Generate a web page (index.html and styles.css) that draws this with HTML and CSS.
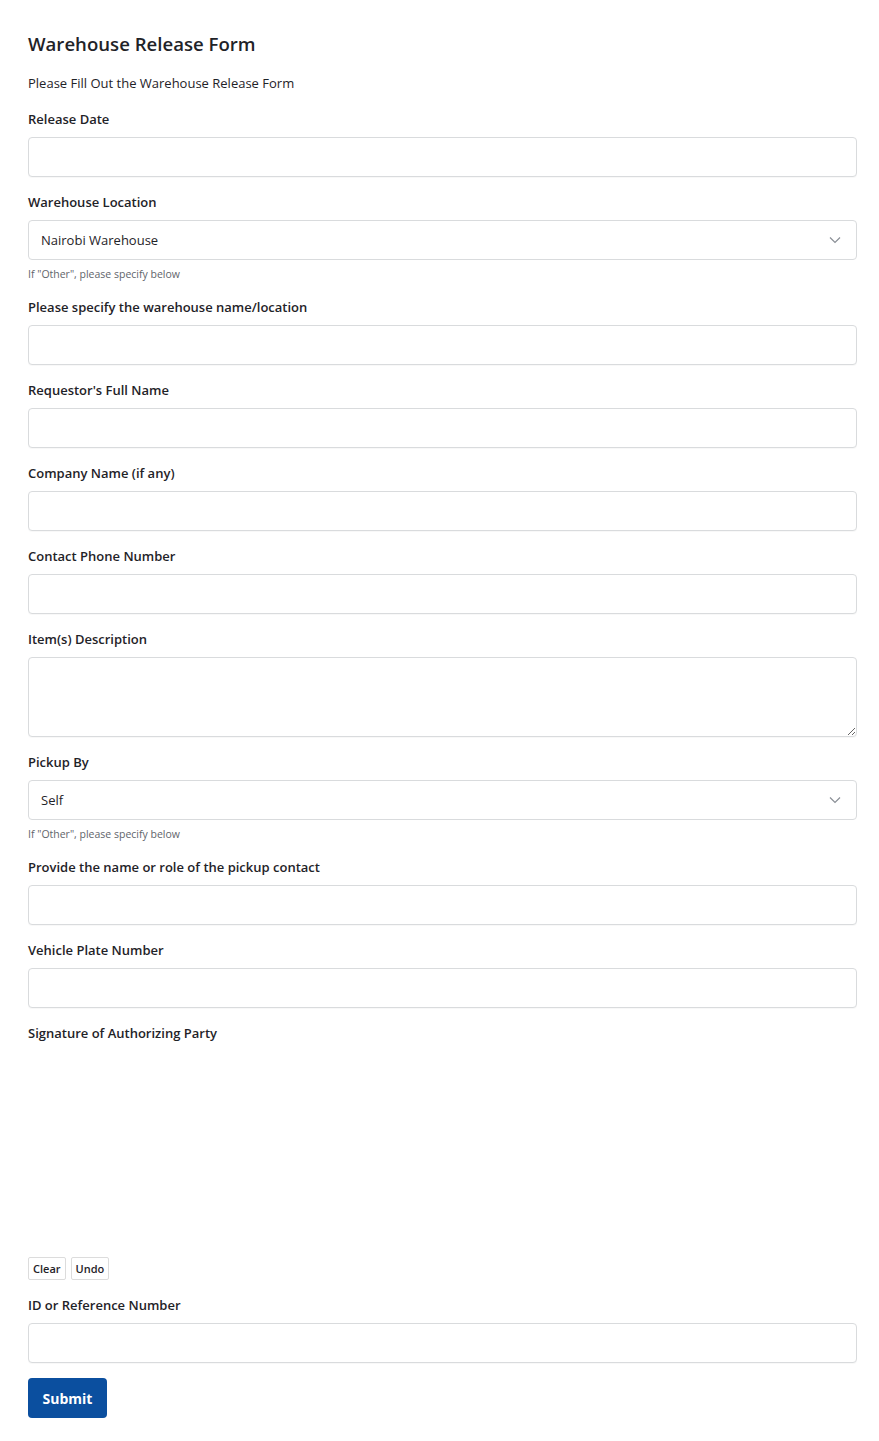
FILE: index.html
```html
<!DOCTYPE html>
<html lang="en">
<head>
<meta charset="utf-8">
<title>Warehouse Release Form</title>
<link rel="stylesheet" href="styles.css">
</head>
<body>
<main class="page">
  <h1 class="title">Warehouse Release Form</h1>
  <p class="intro">Please Fill Out the Warehouse Release Form</p>
  <form class="form">
    <div class="field">
      <label class="label">Release Date</label>
      <input class="input" type="text">
    </div>
    <div class="field">
      <label class="label">Warehouse Location</label>
      <div class="select">
        <span class="select-value">Nairobi Warehouse</span>
        <svg class="chevron" width="12" height="8" viewBox="0 0 12 8"><path d="M1 1.5 L6 6.5 L11 1.5" fill="none" stroke="#8a8f96" stroke-width="1.2"/></svg>
      </div>
      <div class="help">If "Other", please specify below</div>
    </div>
    <div class="field">
      <label class="label">Please specify the warehouse name/location</label>
      <input class="input" type="text">
    </div>
    <div class="field">
      <label class="label">Requestor's Full Name</label>
      <input class="input" type="text">
    </div>
    <div class="field">
      <label class="label">Company Name (if any)</label>
      <input class="input" type="text">
    </div>
    <div class="field">
      <label class="label">Contact Phone Number</label>
      <input class="input" type="text">
    </div>
    <div class="field">
      <label class="label">Item(s) Description</label>
      <textarea class="input textarea"></textarea>
    </div>
    <div class="field">
      <label class="label">Pickup By</label>
      <div class="select">
        <span class="select-value">Self</span>
        <svg class="chevron" width="12" height="8" viewBox="0 0 12 8"><path d="M1 1.5 L6 6.5 L11 1.5" fill="none" stroke="#8a8f96" stroke-width="1.2"/></svg>
      </div>
      <div class="help">If "Other", please specify below</div>
    </div>
    <div class="field">
      <label class="label">Provide the name or role of the pickup contact</label>
      <input class="input" type="text">
    </div>
    <div class="field">
      <label class="label">Vehicle Plate Number</label>
      <input class="input" type="text">
    </div>
    <div class="field">
      <label class="label">Signature of Authorizing Party</label>
      <div class="signature"></div>
      <div class="sig-actions">
        <button type="button" class="small-btn">Clear</button>
        <button type="button" class="small-btn">Undo</button>
      </div>
    </div>
    <div class="field">
      <label class="label">ID or Reference Number</label>
      <input class="input" type="text">
    </div>
    <button type="button" class="submit">Submit</button>
  </form>
</main>
</body>
</html>
```

FILE: styles.css
```css
* { box-sizing: border-box; }
html, body { margin: 0; padding: 0; background: #ffffff; }
body {
  font-family: "Open Sans", "Noto Sans", "Liberation Sans", sans-serif;
  color: #1f2328;
}
.page {
  padding: 30px 22px 20px 28px;
}
.title {
  margin: 0;
  font-size: 18.6px;
  line-height: 28px;
  font-weight: 600;
  color: #1f2328;
}
.intro {
  margin: 15px 0 0;
  font-size: 13px;
  line-height: 20px;
  color: #1f2328;
}
.form {
  display: flex;
  flex-direction: column;
  margin-top: 17px;
}
.field {
  display: flex;
  flex-direction: column;
  margin-bottom: 16px;
}
.label {
  font-size: 13px;
  line-height: 19px;
  font-weight: 600;
  margin-bottom: 8px;
  color: #1f2328;
}
.input {
  display: block;
  width: 100%;
  height: 40px;
  border: 1px solid #d9dbdd;
  border-radius: 4px;
  background: #fff;
  font: inherit;
  padding: 0 12px;
  box-shadow: 0 1px 1px rgba(0,0,0,0.03);
}
.textarea {
  height: 80px;
  resize: vertical;
}
.select {
  display: flex;
  align-items: center;
  justify-content: space-between;
  height: 40px;
  border: 1px solid #d9dbdd;
  border-radius: 4px;
  padding: 0 15px 0 12px;
  font-size: 13px;
  color: #1f2328;
}
.help {
  margin-top: 6px;
  font-size: 10.5px;
  line-height: 16px;
  color: #5f656b;
}
.signature {
  height: 206px;
}
.sig-actions {
  display: flex;
  gap: 5px;
}
.small-btn {
  height: 23px;
  padding: 0 4px;
  border: 1px solid #dcdcdc;
  border-radius: 2px;
  background: #fff;
  font: inherit;
  font-size: 11px;
  font-weight: 600;
  color: #1f2328;
}
.submit {
  align-self: flex-start;
  width: 79px;
  height: 40px;
  border: none;
  border-radius: 4px;
  background: #0b4f9f;
  color: #fff;
  font: inherit;
  font-size: 14px;
  font-weight: 700;
  margin-top: -1px;
}
```
